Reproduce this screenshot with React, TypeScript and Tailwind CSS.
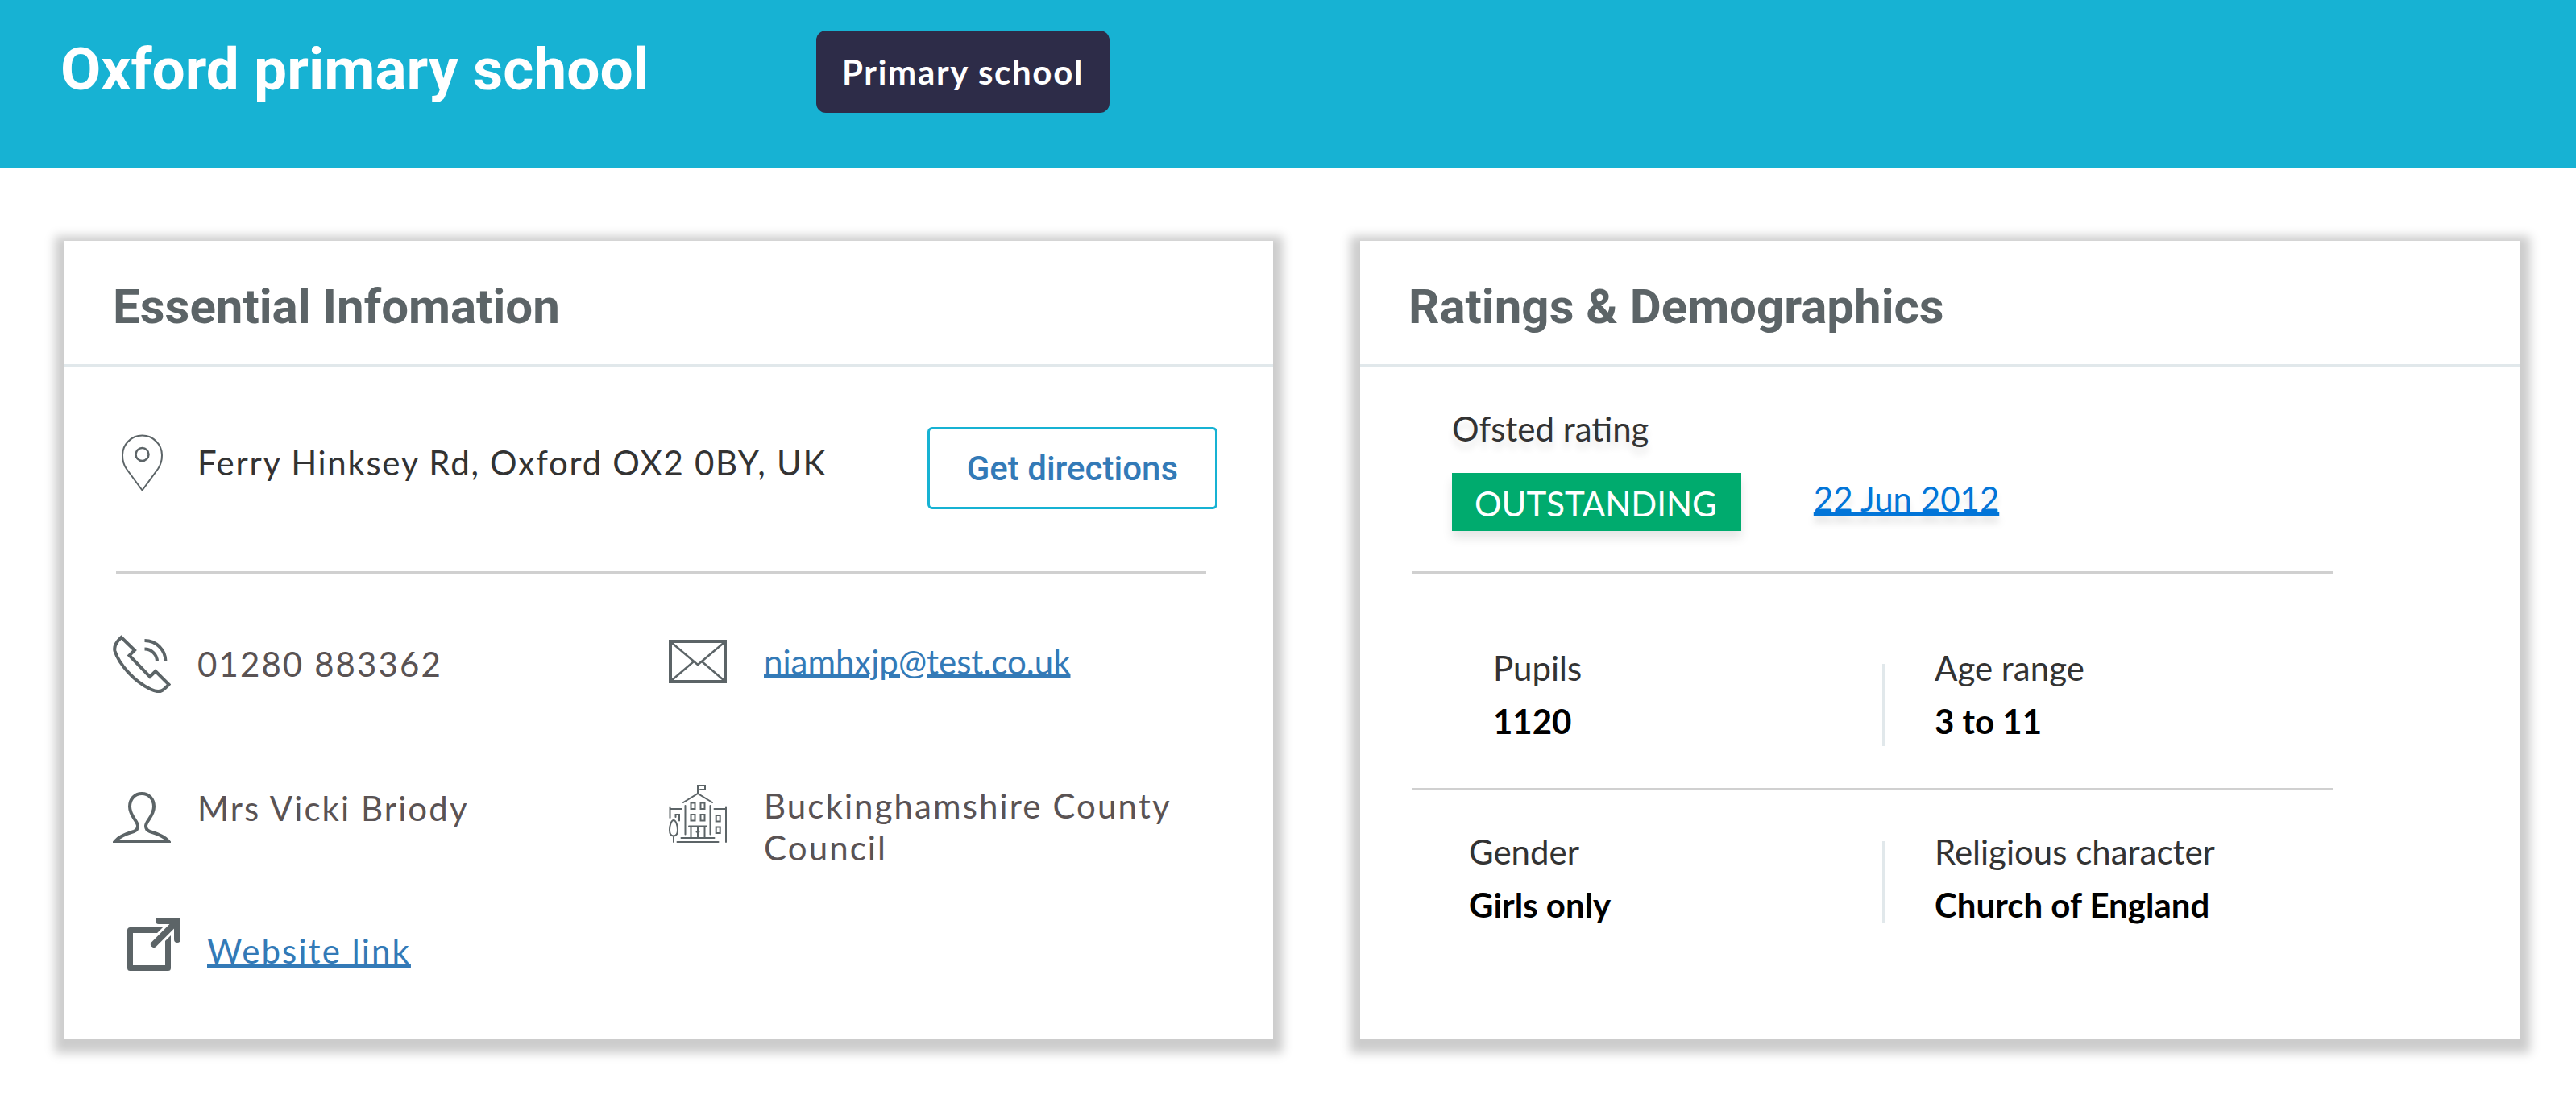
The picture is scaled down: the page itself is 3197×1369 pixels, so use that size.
import type { ReactNode } from "react";

function PinIcon() {
  return (
    <svg className="h-[71px] w-[51px]" viewBox="0 0 51 71" fill="none" stroke="currentColor" aria-hidden="true">
      <path d="M25.5 69.5 L6 43 C2.500 38 1 32.500 1 26 A24.500 24.500 0 0 1 50 26 C50 32.500 48.500 38 45 43 Z" strokeWidth="2" />
      <circle cx="25.500" cy="25" r="8" strokeWidth="2.500" />
    </svg>
  );
}

function PhoneIcon() {
  return (
    <svg className="size-[72px] shrink-0" viewBox="0 0 72 72" fill="none" stroke="currentColor" strokeWidth="4" aria-hidden="true">
      <path d="M10.500 3 L27 19 L20.500 25.500 L46 52 L53 45 L69.500 61.500 C66 65 63 68.500 60 69.500 C57 70.500 52 70 47 67.500 C27 58 8 37 2.500 20 C1 14 4 9 10.500 3 Z" />
      <path d="M39.500 7 A26 26 0 0 1 65.500 33" />
      <path d="M39.500 17.500 A15.500 15.500 0 0 1 55 33" />
    </svg>
  );
}

function PersonIcon() {
  return (
    <svg className="size-[72px] shrink-0" viewBox="0 0 72 72" fill="none" stroke="currentColor" strokeWidth="4" aria-hidden="true">
      <path d="M36 11 C27 11 21 18 21 27 C21 39 31 45 31 51 C31 55 29 57 26 58 C16 61 7 65 3 70 H69 C65 65 56 61 46 58 C43 57 41 55 41 51 C41 45 51 39 51 27 C51 18 45 11 36 11 Z" />
    </svg>
  );
}

function EnvelopeIcon() {
  return (
    <svg className="h-[54px] w-[72px] shrink-0" viewBox="0 0 72 54" fill="none" stroke="currentColor" aria-hidden="true">
      <rect x="2" y="2" width="68" height="50" strokeWidth="4" />
      <path d="M4 4 L36 31 L68 4 M4 50 L31 27 M68 50 L41 27" strokeWidth="2.500" />
    </svg>
  );
}

function CouncilIcon() {
  return (
    <svg className="size-[72px] shrink-0" viewBox="0 0 72 72" fill="none" stroke="currentColor" strokeWidth="2" strokeLinecap="round" aria-hidden="true">
      <path d="M36 11 V1 H45 V6 H39" />
      <path d="M18 22 L36 11 L54 22" />
      <path d="M20.500 26 V61.500 M51.500 26 V61.500" />
      <path d="M27.500 22.500 h5 v7.500 h-5 Z M39.500 22.500 h5 v7.500 h-5 Z M27.500 37 h5 v7.500 h-5 Z M39.500 37 h5 v7.500 h-5 Z" />
      <path d="M25 51.500 H47 M27.500 51.500 V65 M44.500 51.500 V65 M36 51.500 V65 M34.500 58.500 H37.500" />
      <path d="M15.500 66 H56.500 M10.500 71 H61.500" />
      <path d="M1.500 27.500 V41 M1.500 30 H16 M8.500 40 V37 H13 V44.500" />
      <path d="M6 44 C3 44 1 51 1 56 C1 61 3 63.500 6 63.500 C9 63.500 11 61 11 56 C11 51 9 44 6 44 Z M6 63.500 V71" />
      <path d="M71 27.500 V71 M56.500 30 H71 M58.700 38 h5 v7.500 h-5 Z M58.700 52.500 h5 v7.500 h-5 Z" />
    </svg>
  );
}

function ExternalIcon() {
  return (
    <svg className="size-[66px] shrink-0" viewBox="0 0 66 66" fill="none" stroke="currentColor" aria-hidden="true">
      <rect x="3.500" y="15.500" width="47" height="47" strokeWidth="7" strokeLinejoin="round" />
      <path d="M33 33 L62 4" stroke="white" strokeWidth="14" />
      <path d="M33 33 L61 5" strokeWidth="8" strokeLinecap="round" />
      <path d="M39 4 H62 V27" strokeWidth="8" strokeLinecap="round" strokeLinejoin="round" />
    </svg>
  );
}

function Card({ title, children }: { title: string; children: ReactNode }) {
  return (
    <section className="bg-white shadow-[0_6px_12px_12px_#cccccc]">
      <header className="border-b-[3px] border-[#e1e8eb] px-[60px] pt-[46px] pb-[35px]">
        <h2 className="font-['Roboto',sans-serif] text-[60px] leading-[72px] font-bold text-[#5c6467]">{title}</h2>
      </header>
      {children}
    </section>
  );
}

function Fact({ label, value }: { label: string; value: string }) {
  return (
    <dl className="flex flex-col gap-4">
      <dt className="text-[#333333]">{label}</dt>
      <dd className="font-bold text-black">{value}</dd>
    </dl>
  );
}

function Rule() {
  return <hr className="border-t-[3px] border-[#d0d0d0]" />;
}

const linkStyle = "underline decoration-[5px] underline-offset-[0px]";

export default function App() {
  return (
    <div className="min-h-screen bg-white font-['Lato',sans-serif] text-[42px] leading-[50px]">
      <header className="flex items-start bg-[#17b2d3] px-[75px] pt-[38px] pb-[69px]">
        <h1 className="w-[938px] font-['Roboto',sans-serif] text-[73px] leading-[96px] font-bold text-white">
          Oxford primary school
        </h1>
        <span className="rounded-xl bg-[#2d2c48] px-8 py-[26px] font-bold tracking-[0.04em] text-white">
          Primary school
        </span>
      </header>

      <main className="grid grid-cols-[1500fr_1440fr] gap-[108px] pt-[90px] pr-[69px] pb-20 pl-20">
        <Card title="Essential Infomation">
          <div className="pt-[75px] pr-[69px] pb-[84px] pl-[60px] text-[#5a5354]">
            <div className="flex items-start justify-between">
              <div className="flex h-[88px] items-center gap-[33px]">
                <span className="flex w-[72px] justify-center text-[#5c6467]">
                  <PinIcon />
                </span>
                <address className="tracking-[0.04em] text-[#333333] not-italic">
                  Ferry Hinksey Rd, Oxford OX2 0BY, UK
                </address>
              </div>
              <button
                type="button"
                className="rounded-md border-[3px] border-[#17b2d3] px-[46px] pt-6 pb-[22px] font-['Roboto',sans-serif] font-medium text-[#337ab7]"
              >
                Get directions
              </button>
            </div>

            <div className="mt-[77px] mr-[14px] mb-[76px] ml-1">
              <Rule />
            </div>

            <div className="grid grid-cols-[690fr_681fr] items-start gap-y-[114px]">
              <div className="flex h-[72px] items-center gap-[33px]">
                <span className="text-[#5c6467]">
                  <PhoneIcon />
                </span>
                <span className="tracking-wider">01280 883362</span>
              </div>
              <div className="flex h-[66px] items-center gap-[46px]">
                <span className="text-[#5c6467]">
                  <EnvelopeIcon />
                </span>
                <a href="mailto:niamhxjp@test.co.uk" className={`${linkStyle} text-[#337ab7]`}>
                  niamhxjp@test.co.uk
                </a>
              </div>
              <div className="flex items-start gap-[33px]">
                <span className="text-[#5c6467]">
                  <PersonIcon />
                </span>
                <span className="pt-1 tracking-wider">Mrs Vicki Briody</span>
              </div>
              <div className="flex items-start gap-[46px]">
                <span className="text-[#5c6467]">
                  <CouncilIcon />
                </span>
                <span className="leading-[52px] tracking-wider">Buckinghamshire County Council</span>
              </div>
            </div>

            <div className="mt-[61px] flex items-end gap-[33px] pl-[18px]">
              <span className="text-[#5c6467]">
                <ExternalIcon />
              </span>
              <a href="#website" className={`${linkStyle} tracking-wider text-[#337ab7]`}>
                Website link
              </a>
            </div>
          </div>
        </Card>

        <Card title="Ratings &amp; Demographics">
          <div className="pt-[52px] pr-[233px] pl-[65px]">
            <div className="pb-[50px] pl-[49px] text-shadow-[0_9px_9px_#0000001a]">
              <p className="text-[#333333]">Ofsted rating</p>
              <div className="mt-[30px] flex items-start gap-[90px]">
                <span className="bg-[#00ab6e] pt-[13px] pr-[30px] pb-[9px] pl-[28px] text-white shadow-[0_9px_12px_#0000001a] text-shadow-none">
                  OUTSTANDING
                </span>
                <a href="#ofsted-report" className={`${linkStyle} pt-[7px] text-[#0275d8]`}>
                  22 Jun 2012
                </a>
              </div>
            </div>
            <Rule />
            <div className="grid grid-cols-[583fr_559fr] pt-[92px] pb-[52px]">
              <div className="pl-[100px]">
                <Fact label="Pupils" value="1120" />
              </div>
              <div className="flex gap-[62px]">
                <div className="mt-5 h-[102px] w-[3px] bg-[#e1e8eb]" />
                <Fact label="Age range" value="3 to 11" />
              </div>
            </div>
            <Rule />
            <div className="grid grid-cols-[583fr_559fr] pt-[51px]">
              <div className="pl-[70px]">
                <Fact label="Gender" value="Girls only" />
              </div>
              <div className="flex gap-[62px]">
                <div className="mt-3 h-[102px] w-[3px] bg-[#e1e8eb]" />
                <Fact label="Religious character" value="Church of England" />
              </div>
            </div>
          </div>
        </Card>
      </main>
    </div>
  );
}
